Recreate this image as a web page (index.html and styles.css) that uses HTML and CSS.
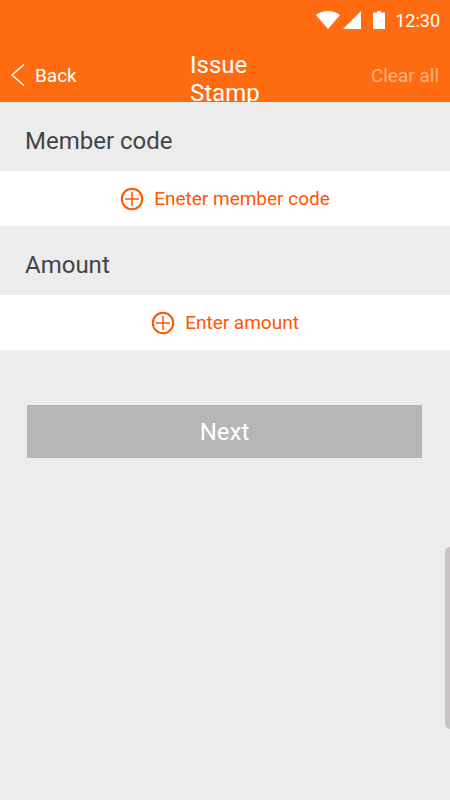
FILE: index.html
```html
<!DOCTYPE html>
<html lang="en">
<head>
    <meta charset="UTF-8">
    <meta name="viewport" content="width=device-width, initial-scale=1.0">
    <title>Issue Stamp</title>
    <link rel="stylesheet" href="styles.css">
</head>
<body>
    <header>
        <!-- Status bar -->
        <div class="status-bar">
            <svg class="wifi" width="24" height="18" viewBox="0 0 24 18" fill="currentColor">
                <path d="M0 4C6.500-1.300 17.500-1.300 24 4L12 18Z"/>
            </svg>
            <svg class="signal" width="18" height="18" viewBox="0 0 18 18" fill="currentColor">
                <path d="M18 0V18H0Z"/>
            </svg>
            <svg class="battery" width="12" height="18" viewBox="0 0 12 18" fill="currentColor">
                <path d="M4 0h4v1.500h4V18H0V1.500h4Z"/>
            </svg>
            <time>12:30</time>
        </div>

        <!-- Navigation bar -->
        <nav>
            <a class="back" href="#back">
                <svg width="14" height="22" viewBox="0 0 14 22" fill="none" stroke="currentColor" stroke-width="1.500">
                    <path d="M13 .5L1 11L13 21.500"/>
                </svg>
                Back
            </a>
            <h1>Issue Stamp</h1>
            <button class="clear" type="button">Clear all</button>
        </nav>
    </header>

    <main>
        <section>
            <h2>Member code</h2>
            <button class="entry" type="button">
                <svg width="24" height="24" viewBox="0 0 24 24" fill="none" stroke="currentColor">
                    <circle cx="12" cy="12" r="10.200" stroke-width="2"/>
                    <path d="M12 5v14M5 12h14" stroke-width="1.500"/>
                </svg>
                Eneter member code
            </button>
        </section>

        <section>
            <h2>Amount</h2>
            <button class="entry" type="button">
                <svg width="24" height="24" viewBox="0 0 24 24" fill="none" stroke="currentColor">
                    <circle cx="12" cy="12" r="10.200" stroke-width="2"/>
                    <path d="M12 5v14M5 12h14" stroke-width="1.500"/>
                </svg>
                Enter amount
            </button>
        </section>

        <button class="next" type="button">Next</button>
    </main>

    <!-- Edge handle -->
    <div class="edge-handle"></div>
</body>
</html>
```

FILE: styles.css
```css
* {
    margin: 0;
    padding: 0;
    box-sizing: border-box;
}

body {
    font-family: Roboto, sans-serif;
    background: #ececec;
    color: #444446;
    min-height: 100vh;
    overflow-x: hidden;
}

button {
    border: none;
    background: none;
    font-family: inherit;
    cursor: pointer;
}

header {
    background: #ff6b11;
    color: white;
}

.status-bar {
    display: flex;
    justify-content: flex-end;
    align-items: center;
    height: 48px;
    padding: 0 10px 8px;
    font-size: 18px;
}

.signal {
    margin-left: 3px;
}

.battery {
    margin: 0 10px 0 12px;
}

nav {
    display: grid;
    grid-template-columns: 1fr 70px 1fr;
    height: 54px;
    padding: 0 11px;
    overflow: hidden;
}

.back {
    display: flex;
    align-items: center;
    gap: 10px;
    padding-bottom: 5px;
    color: white;
    font-size: 19px;
    text-decoration: none;
}

h1 {
    padding-top: 3px;
    font-size: 24px;
    font-weight: 400;
    line-height: 28px;
}

.clear {
    justify-self: end;
    padding-bottom: 5px;
    color: #ffb17f;
    font-size: 19px;
}

h2 {
    padding: 25px 25px 16px;
    font-size: 24px;
    font-weight: 400;
    line-height: 28px;
}

.entry {
    display: flex;
    justify-content: center;
    align-items: center;
    gap: 10px;
    width: 100%;
    height: 55px;
    background: white;
    color: #ff5600;
    font-size: 19px;
}

.next {
    display: block;
    width: calc(100% - 55px);
    height: 53px;
    margin: 55px 28px 55px 27px;
    background: #b6b6b6;
    color: white;
    font-size: 24px;
}

.edge-handle {
    position: fixed;
    top: 547px;
    right: 0;
    width: 5px;
    height: 182px;
    background: #c6c3c2;
    border-radius: 5px 0 0 5px;
}
```
